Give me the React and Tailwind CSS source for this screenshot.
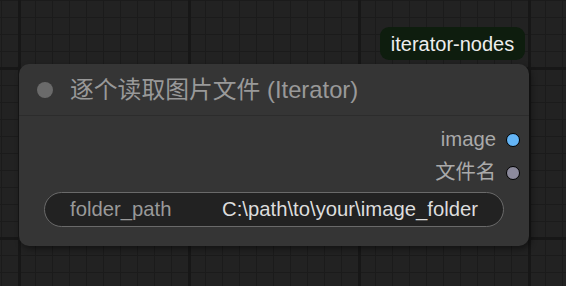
export default function App() {
    const outputs = [
        { label: "image", dot: "bg-[#64b5f6]" },
        { label: "文件名", dot: "bg-[#8c8a9c]" },
    ];

    return (
        <div className="relative w-[566px] h-[286px] overflow-hidden bg-[#222222] font-['Liberation_Sans','Noto_Sans_CJK_SC',sans-serif] [background-image:linear-gradient(to_right,#171717_3px,transparent_3px),linear-gradient(to_bottom,#171717_3px,transparent_3px),linear-gradient(to_right,#1b1b1b_1px,transparent_1px),linear-gradient(to_bottom,#1b1b1b_1px,transparent_1px)] [background-size:170px_170px,170px_170px,17px_17px,17px_17px] [background-position:18px_0,0_67px,1px_0,0_0]">
            {/* Group tag */}
            <div className="absolute left-[380px] top-[27px] w-[145px] h-[33px] rounded-[9px] bg-[#0e1d0e] flex items-center justify-center text-[20px] text-[#eeeeee]">
                iterator-nodes
            </div>

            {/* Node */}
            <div className="absolute left-[19px] top-[64px] w-[510px] h-[182px] rounded-[10px] bg-[#353535] shadow-[2px_3px_6px_rgba(0,0,0,0.45)] flex flex-col">
                <div className="h-[52px] flex items-center border-b border-[#2c2c2c]">
                    <div className="ml-[18px] w-[16px] h-[16px] rounded-full bg-[#6a6a6a]" />
                    <span className="ml-[17px] text-[23.8px] text-[#999999] leading-none">逐个读取图片文件 (Iterator)</span>
                </div>

                <div className="flex flex-col pt-[7px]">
                    {outputs.map((o) => (
                        <div key={o.label} className="h-[33px] flex items-center justify-end pr-[9px]">
                            <span className="text-[20.3px] text-[#aaaaaa] leading-none">{o.label}</span>
                            <div className={`ml-[10px] w-[14px] h-[14px] rounded-full border-[1.5px] border-black ${o.dot}`} />
                        </div>
                    ))}
                </div>

                <div className="mx-[25px] mt-[3px] h-[35px] rounded-full border-[1.5px] border-[#6a6a6a] bg-[#222222] flex items-center justify-between px-[25px] text-[20.3px] leading-none">
                    <span className="text-[#999999]">folder_path</span>
                    <span className="text-[#dddddd]">C:\path\to\your\image_folder</span>
                </div>
            </div>
        </div>
    );
}
